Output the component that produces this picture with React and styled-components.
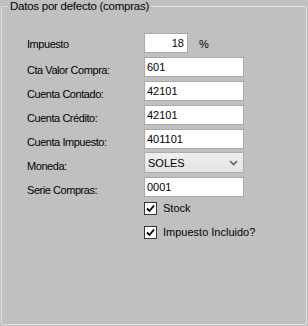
import React from 'react'
import styled, { createGlobalStyle } from 'styled-components'

const GlobalStyle = createGlobalStyle`
    html, body {
        margin: 0;
        padding: 0;
        background: #c0c0c0;
    }
    body {
        font-family: "Liberation Sans", Arial, sans-serif;
        font-size: 11px;
        color: #000;
    }
`;

const fields = [
    { label: 'Cta Valor Compra:', value: '601' },
    { label: 'Cuenta Contado:', value: '42101' },
    { label: 'Cuenta Crédito:', value: '42101' },
    { label: 'Cuenta Impuesto:', value: '401101' },
];

function App() {
    return (
        <>
            <GlobalStyle />
            <Page>
                <Group>
                    <Legend>Datos por defecto (compras)</Legend>
                    <Form>
                        <Label $first>Impuesto</Label>
                        <InlineCell>
                            <TextBox $narrow $right defaultValue="18" readOnly />
                            <Unit>%</Unit>
                        </InlineCell>

                        {fields.map(f => (
                            <React.Fragment key={f.label}>
                                <Label>{f.label}</Label>
                                <TextBox defaultValue={f.value} readOnly />
                            </React.Fragment>
                        ))}

                        <Label>Moneda:</Label>
                        <Combo>
                            <span>SOLES</span>
                            <svg width="9" height="6" viewBox="0 0 9 6" fill="none">
                                <path d="M1 1L4.5 4.5L8 1" stroke="#606060" strokeWidth="1.6" />
                            </svg>
                        </Combo>

                        <Label>Serie Compras:</Label>
                        <TextBox defaultValue="0001" readOnly />

                        <Spacer />
                        <CheckRow $first>
                            <CheckBox><Tick /></CheckBox>
                            <span>Stock</span>
                        </CheckRow>

                        <Spacer />
                        <CheckRow>
                            <CheckBox><Tick /></CheckBox>
                            <span>Impuesto Incluido?</span>
                        </CheckRow>
                    </Form>
                </Group>
            </Page>
        </>
    )
}

function Tick() {
    return (
        <svg width="9" height="9" viewBox="0 0 9 9" fill="none">
            <path d="M1 4.5L3.5 7L8 1.5" stroke="#000" strokeWidth="1.8" />
        </svg>
    )
}

const Page = styled.div`
    width: 308px;
    height: 326px;
    box-sizing: border-box;
    padding: 6px 1px 1px 1px;
    background: #c0c0c0;
`;

const Group = styled.div`
    position: relative;
    height: 100%;
    box-sizing: border-box;
    border: 1px solid #e0e0e0;
    border-radius: 2px;
`;

const Legend = styled.div`
    position: absolute;
    top: -7px;
    left: 6px;
    padding: 0 2px;
    background: #c0c0c0;
    font-size: 11.5px;
    line-height: 13px;
    letter-spacing: -0.25px;
    color: #000;
`;

const Form = styled.div`
    display: grid;
    grid-template-columns: 117px 160px;
    row-gap: 4px;
    padding: 26px 0 0 25px;
`;

const Label = styled.div`
    letter-spacing: -0.45px;
    line-height: 13px;
    height: 20px;
    box-sizing: border-box;
    padding-top: ${p => (p.$first ? '5px' : '7px')};
    white-space: nowrap;
`;

const InlineCell = styled.div`
    display: flex;
    align-items: center;
    gap: 11px;
`;

const TextBox = styled.input`
    width: ${p => (p.$narrow ? '44px' : '100px')};
    height: 20px;
    box-sizing: border-box;
    margin: 0;
    padding: 0 3px 0 2px;
    border: 1px solid #a9a9a9;
    background: #fff;
    font-family: "Liberation Sans", Arial, sans-serif;
    font-size: 11px;
    color: #000;
    text-align: ${p => (p.$right ? 'right' : 'left')};
    outline: none;
`;

const Unit = styled.span`
    padding-top: 1px;
`;

const Combo = styled.div`
    width: 100px;
    height: 21px;
    margin: -1px 0 0 0;
    box-sizing: border-box;
    display: flex;
    align-items: center;
    justify-content: space-between;
    padding: 0 5px 0 3px;
    border: 1px solid #acacac;
    background: linear-gradient(#efefef, #e3e3e3);
    font-size: 11px;
`;

const Spacer = styled.div``;

const CheckRow = styled.div`
    display: flex;
    align-items: center;
    gap: 6px;
    height: 13px;
    margin-top: ${p => (p.$first ? '1px' : '7px')};
    line-height: 13px;
`;

const CheckBox = styled.div`
    width: 13px;
    height: 13px;
    box-sizing: border-box;
    border: 1px solid #333;
    background: #fff;
    display: flex;
    align-items: center;
    justify-content: center;
`;

export default App
